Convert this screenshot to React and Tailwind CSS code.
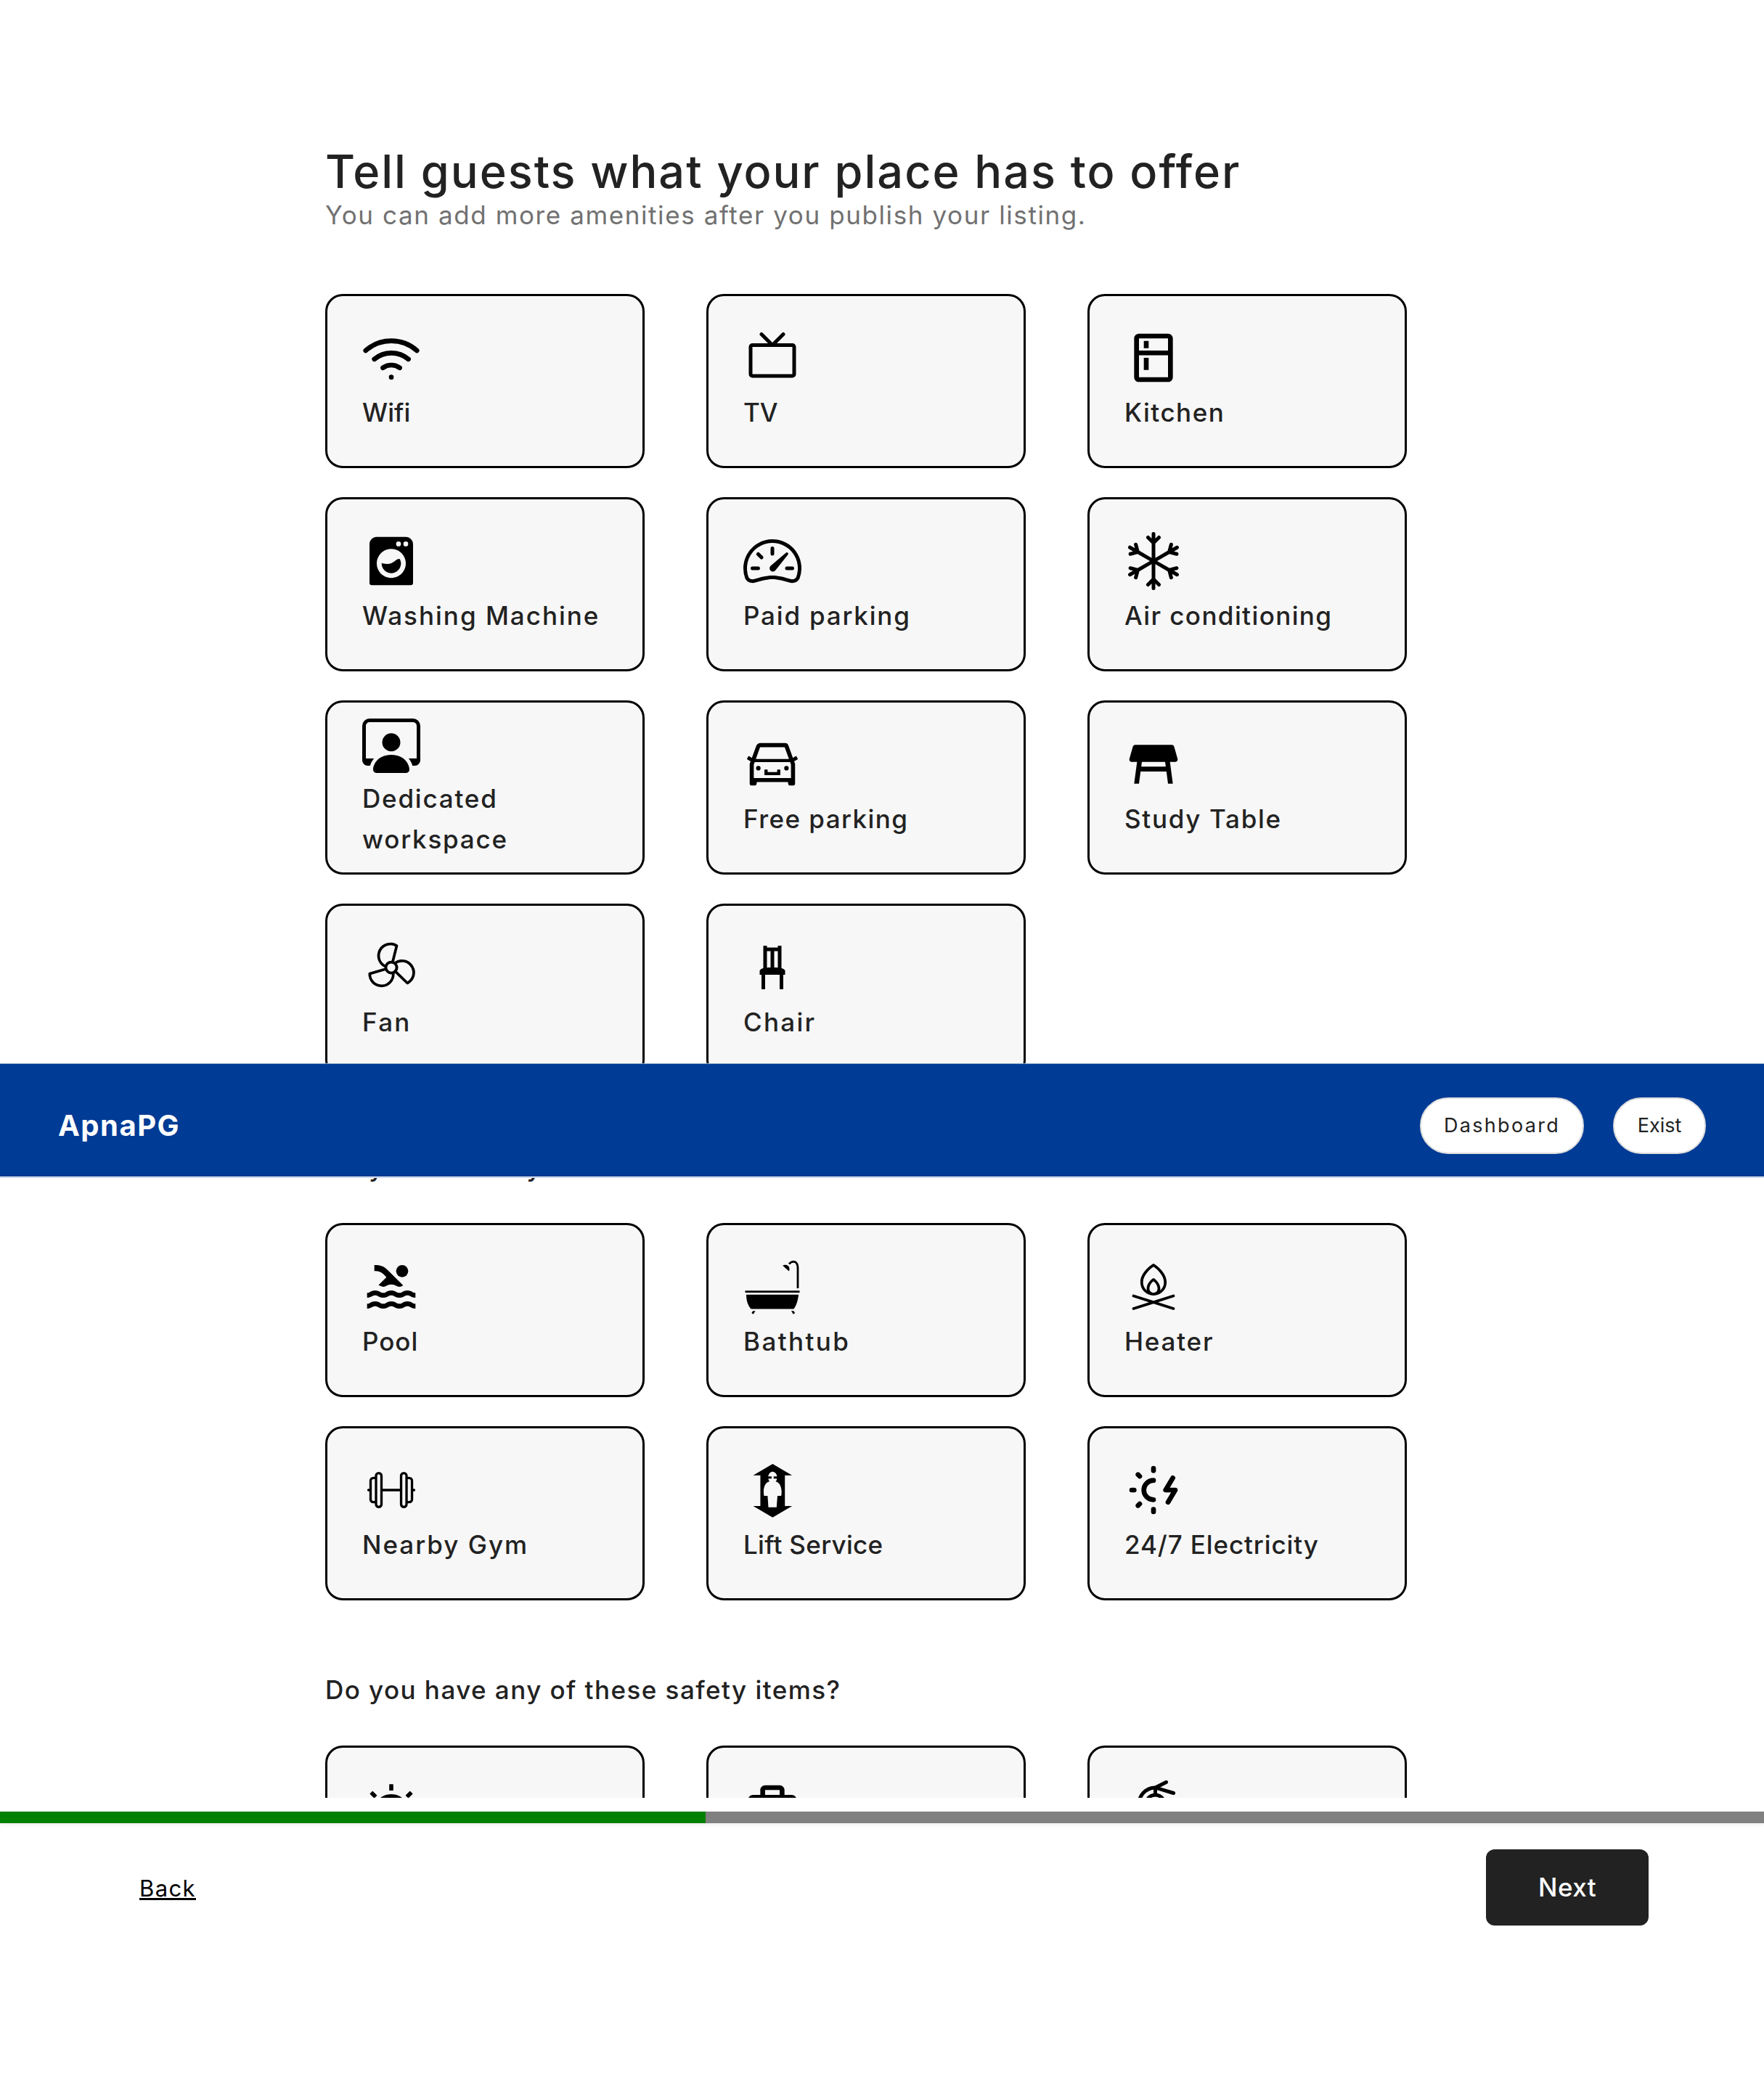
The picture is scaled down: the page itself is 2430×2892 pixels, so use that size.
import { FiWifi } from "react-icons/fi";
import { BsSnow, BsPersonWorkspace, BsSpeedometer2 } from "react-icons/bs";
import { PiTelevisionSimple, PiFanLight, PiCampfireLight, PiFireExtinguisher } from "react-icons/pi";
import { MdOutlineKitchen, MdTableRestaurant, MdPool } from "react-icons/md";
import { BiSolidWasher, BiFirstAid } from "react-icons/bi";
import { LiaChairSolid } from "react-icons/lia";
import { GiBathtub, GiLift } from "react-icons/gi";
import { CiDumbbell } from "react-icons/ci";
import { TbSunElectricity } from "react-icons/tb";
import { AiOutlineAlert, AiOutlineCar } from "react-icons/ai";

const offers = [
  { label: "Wifi", Icon: FiWifi, tracking: "tracking-[0.1px]" },
  { label: "TV", Icon: PiTelevisionSimple, tracking: "tracking-normal" },
  { label: "Kitchen", Icon: MdOutlineKitchen, tracking: "tracking-[1.5px]" },
  { label: "Washing Machine", Icon: BiSolidWasher, tracking: "tracking-[2px]" },
  { label: "Paid parking", Icon: BsSpeedometer2, tracking: "tracking-[1.8px]" },
  { label: "Air conditioning", Icon: BsSnow, tracking: "tracking-[1.4px]" },
  { label: "Dedicated workspace", Icon: BsPersonWorkspace, tracking: "tracking-[1.8px]" },
  { label: "Free parking", Icon: AiOutlineCar, tracking: "tracking-[1.45px]" },
  { label: "Study Table", Icon: MdTableRestaurant, tracking: "tracking-[1.7px]" },
  { label: "Fan", Icon: PiFanLight, tracking: "tracking-[2.3px]" },
  { label: "Chair", Icon: LiaChairSolid, tracking: "tracking-[2.3px]" },
];

const standout = [
  { label: "Pool", Icon: MdPool, tracking: "tracking-[1px]" },
  { label: "Bathtub", Icon: GiBathtub, tracking: "tracking-[2.4px]" },
  { label: "Heater", Icon: PiCampfireLight, tracking: "tracking-[1.8px]" },
  { label: "Nearby Gym", Icon: CiDumbbell, tracking: "tracking-[2px]" },
  { label: "Lift Service", Icon: GiLift, tracking: "tracking-[0.3px]" },
  { label: "24/7 Electricity", Icon: TbSunElectricity, tracking: "tracking-[0.9px]" },
];

const safety = [
  { label: "Smoke alarm", Icon: AiOutlineAlert, tracking: "tracking-[1.5px]" },
  { label: "First aid kit", Icon: BiFirstAid, tracking: "tracking-[1.5px]" },
  { label: "Fire extinguisher", Icon: PiFireExtinguisher, tracking: "tracking-[1.5px]" },
];

function AmenityGrid({ items }) {
  return (
    <div className="grid grid-cols-[440px_440px_440px] auto-rows-[240px] gap-x-[85px] gap-y-10">
      {items.map(({ label, Icon, tracking }) => (
        <div
          key={label}
          className="flex flex-col justify-center gap-[7px] rounded-3xl border-3 border-black bg-[#f7f7f7] px-12 pb-px"
        >
          <Icon size={80} className="shrink-0 text-black" />
          <p className={`text-[35px] leading-[56px] font-medium ${tracking}`}>{label}</p>
        </div>
      ))}
    </div>
  );
}

function SectionTitle({ children }) {
  return (
    <h2 className="mt-[95px] mb-[49px] text-[35px] leading-[56px] font-medium tracking-[1.45px]">{children}</h2>
  );
}

function Pill({ children, className }) {
  return (
    <button
      className={`flex h-[78px] items-center justify-center rounded-full border-2 border-[#ddd] bg-white text-[27px] ${className}`}
    >
      {children}
    </button>
  );
}

export default function App() {
  return (
    <div className="relative h-[2892px] overflow-hidden bg-white font-['Inter',sans-serif] text-[#222]">
      <main className="ml-[448px] w-[1490px] pt-[201px]">
        <h1 className="text-[63px] leading-[71px] font-medium tracking-[2px]">
          Tell guests what your place has to offer
        </h1>
        <p className="mt-px mb-[85px] text-[35px] leading-[47px] tracking-[1.6px] text-[#717171]">
          You can add more amenities after you publish your listing.
        </p>
        <AmenityGrid items={offers} />
        <SectionTitle>Do you have any standout amenities?</SectionTitle>
        <AmenityGrid items={standout} />
        <SectionTitle>Do you have any of these safety items?</SectionTitle>
        <AmenityGrid items={safety} />
      </main>

      <div className="absolute inset-x-0 top-[1465px] border-b border-[#b9c5e3] bg-white pb-px">
        <header className="flex h-[156px] items-center justify-between border-t border-[#8aa5cc] bg-[#003b95] px-20 pt-[17px]">
          <span className="mb-[3px] text-[40px] font-bold tracking-[1.5px] text-white">ApnaPG</span>
          <nav className="mb-0.5 flex gap-10">
            <Pill className="w-[226px] tracking-[2.3px]">Dashboard</Pill>
            <Pill className="w-32">Exist</Pill>
          </nav>
        </header>
      </div>

      <footer className="absolute inset-x-0 bottom-0 h-[415px] bg-white pt-[19px]">
        <div className="h-4 bg-[#808080] shadow-[0_2px_5px_rgba(0,0,0,0.08)]">
          <div className="h-full w-2/5 bg-[#008000]" />
        </div>
        <div className="flex items-center justify-between pt-[36px] pr-[159px] pl-48">
          <a className="mt-[3px] text-[31px] tracking-[1.4px] text-black underline decoration-3 underline-offset-2">
            Back
          </a>
          <button className="h-[105px] w-56 rounded-xl bg-[#222] text-[35px] font-medium tracking-[0.4px] text-white">
            Next
          </button>
        </div>
      </footer>
    </div>
  );
}
